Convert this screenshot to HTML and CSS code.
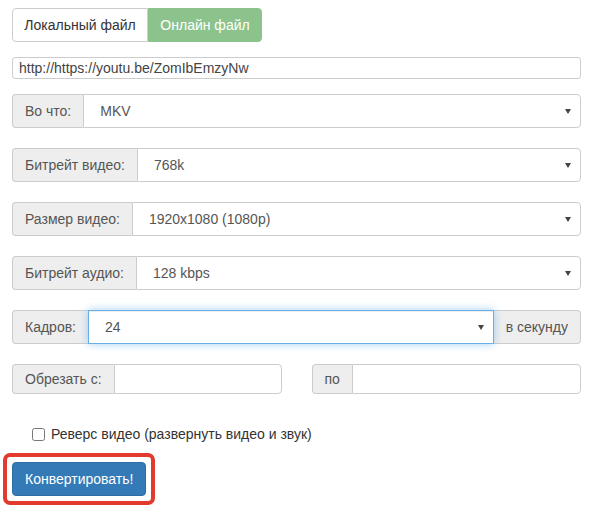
FILE: index.html
```html
<!DOCTYPE html>
<html lang="ru">
<head>
<meta charset="utf-8">
<title>Конвертер</title>
<link rel="stylesheet" href="styles.css">
</head>
<body>
<div class="page">
  <div class="tabs">
    <span class="tab">Локальный файл</span>
    <span class="tab tab-active">Онлайн файл</span>
  </div>

  <input class="url" type="text" value="http://https://youtu.be/ZomIbEmzyNw">

  <div class="group">
    <span class="addon">Во что:</span>
    <div class="select-wrap"><select class="select"><option>MKV</option></select></div>
  </div>

  <div class="group">
    <span class="addon">Битрейт видео:</span>
    <div class="select-wrap"><select class="select"><option>768k</option></select></div>
  </div>

  <div class="group">
    <span class="addon">Размер видео:</span>
    <div class="select-wrap"><select class="select"><option>1920x1080 (1080p)</option></select></div>
  </div>

  <div class="group">
    <span class="addon">Битрейт аудио:</span>
    <div class="select-wrap"><select class="select"><option>128 kbps</option></select></div>
  </div>

  <div class="group">
    <span class="addon">Кадров:</span>
    <div class="select-wrap focus"><select class="select"><option>24</option></select></div>
    <span class="addon addon-right">в секунду</span>
  </div>

  <div class="cut-row">
    <div class="group group-sm">
      <span class="addon">Обрезать с:</span>
      <input class="field" type="text">
    </div>
    <div class="group group-sm">
      <span class="addon">по</span>
      <input class="field" type="text">
    </div>
  </div>

  <label class="check">
    <input type="checkbox" class="check-box">
    <span>Реверс видео (развернуть видео и звук)</span>
  </label>

  <div class="highlight">
    <button class="btn" type="button">Конвертировать!</button>
  </div>
</div>
</body>
</html>
```

FILE: styles.css
```css
* { box-sizing: border-box; }

html, body {
  margin: 0;
  padding: 0;
  background: #fff;
}

body {
  font-family: "Liberation Sans", Arial, sans-serif;
  font-size: 14px;
  color: #333;
}

.page {
  width: 591px;
  padding: 8px 10px 0 12px;
}

.tabs {
  display: flex;
  height: 34px;
  margin-bottom: 15px;
}

.tab {
  display: flex;
  align-items: center;
  justify-content: center;
  padding: 0 12px;
  border: 1px solid #ccc;
  background: #fff;
  color: #333;
  font-size: 14px;
  border-radius: 4px 0 0 4px;
  width: 136px;
  white-space: nowrap;
}

.tab-active {
  width: 114px;
  background: #8cc38c;
  border-color: #8cc38c;
  color: #fff;
  border-radius: 0 4px 4px 0;
}

.url {
  display: block;
  width: 100%;
  height: 22px;
  margin: 0 0 15px 0;
  padding: 0 6px;
  border: 1px solid #ccc;
  border-radius: 3px;
  font-family: inherit;
  font-size: 14px;
  color: #444;
  outline: none;
}

.group {
  display: flex;
  height: 34px;
  margin-bottom: 20px;
  min-width: 0;
}

.addon {
  display: flex;
  align-items: center;
  padding: 0 12px;
  background: #eee;
  border: 1px solid #ccc;
  border-right: 0;
  border-radius: 4px 0 0 4px;
  color: #555;
  white-space: nowrap;
}

.addon-right {
  border-right: 1px solid #ccc;
  border-left: 0;
  border-radius: 0 4px 4px 0;
}

.select-wrap {
  position: relative;
  flex: 1;
  display: flex;
}

.select-wrap::after {
  content: "";
  position: absolute;
  right: 10px;
  top: 15px;
  z-index: 2;
  border-left: 3.5px solid transparent;
  border-right: 3.5px solid transparent;
  border-top: 5px solid #444;
  pointer-events: none;
}

.select {
  flex: 1;
  -webkit-appearance: none;
  appearance: none;
  height: 100%;
  padding: 0 16px;
  border: 1px solid #ccc;
  border-radius: 0 4px 4px 0;
  background: #fff;
  font-family: inherit;
  font-size: 14px;
  color: #555;
  outline: none;
}

.focus .select {
  border-color: #66afe9;
  border-radius: 0;
  box-shadow: inset 0 1px 1px rgba(0,0,0,.075), 0 0 8px rgba(102,175,233,.6);
  position: relative;
  z-index: 1;
}

.cut-row {
  display: grid;
  grid-template-columns: minmax(0, 1fr) minmax(0, 1fr);
  column-gap: 30px;
}

.group-sm {
  height: 30px;
  margin-bottom: 0;
}

.field {
  flex: 1;
  min-width: 0;
  width: 0;
  height: 100%;
  border: 1px solid #ccc;
  border-radius: 0 4px 4px 0;
  padding: 0 10px;
  font-family: inherit;
  font-size: 14px;
  outline: none;
}

.check {
  display: flex;
  align-items: center;
  height: 20px;
  margin: 30px 0 0 20px;
  color: #333;
  font-size: 14px;
}

.check-box {
  width: 13px;
  height: 13px;
  margin: 0 6px 0 0;
}

.highlight {
  display: inline-block;
  margin: 9px 0 0 -9px;
  padding: 5px;
  border: 4px solid #e23a2f;
  border-radius: 7px;
}

.btn {
  display: block;
  height: 34px;
  padding: 0 12px;
  border: 1px solid #2e6da4;
  border-radius: 4px;
  background: #337ab7;
  color: #fff;
  font-family: inherit;
  font-size: 14px;
}
```
